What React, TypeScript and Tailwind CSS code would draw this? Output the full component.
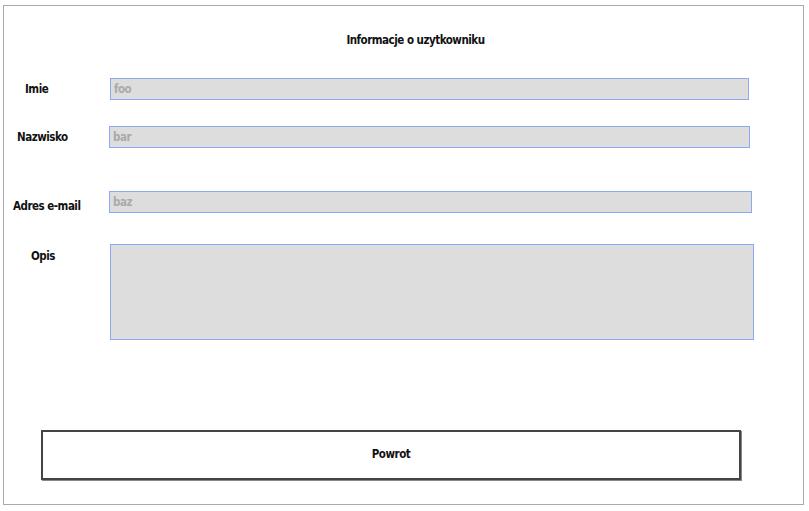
export default function App() {
  const font = { fontFamily: '"DejaVu Sans Condensed", "DejaVu Sans", sans-serif' };
  const inputCls =
    "h-[22px] border border-[#8aaaf5] bg-[#dddddd] px-[3px] text-[11.5px] font-bold tracking-[-0.5px] text-[#aaaaaa] placeholder:text-[#aaaaaa] outline-none";

  return (
    <div className="min-h-[511px] w-[809px] bg-white pt-[5px] pl-[3px]" style={font}>
      <div className="flex h-[500px] w-[801px] flex-col border border-[#aaaaaa] text-[11.5px] font-bold tracking-[-0.5px] text-[#111]">
        <div className="mt-[26px] h-[16px] pl-[24px] text-center leading-[16px]">Informacje o uzytkowniku</div>

        <div className="mt-[30px] flex items-center">
          <label className="w-[106px] pl-[21px] leading-[16px]">Imie</label>
          <input className={`${inputCls} w-[639px]`} placeholder="foo" />
        </div>

        <div className="mt-[26px] flex items-center">
          <label className="w-[105px] pl-[13px] leading-[16px]">Nazwisko</label>
          <input className={`${inputCls} w-[641px]`} placeholder="bar" />
        </div>

        <div className="mt-[43px] flex items-center">
          <label className="w-[105px] translate-y-[4px] pl-[9px] leading-[16px]">Adres e-mail</label>
          <input className={`${inputCls} w-[643px]`} placeholder="baz" />
        </div>

        <div className="mt-[31px] flex items-start">
          <label className="w-[106px] pl-[27px] pt-[4px] leading-[16px]">Opis</label>
          <textarea className="h-[96px] w-[644px] resize-none border border-[#8aaaf5] bg-[#dddddd] outline-none" />
        </div>

        <button className="ml-[37px] mt-[90px] h-[50px] w-[700px] border-2 border-[#444444] bg-white text-[11.5px] font-bold tracking-[-0.5px] text-[#111] shadow-[1px_1px_0_#888888]">
          Powrot
        </button>
      </div>
    </div>
  );
}
